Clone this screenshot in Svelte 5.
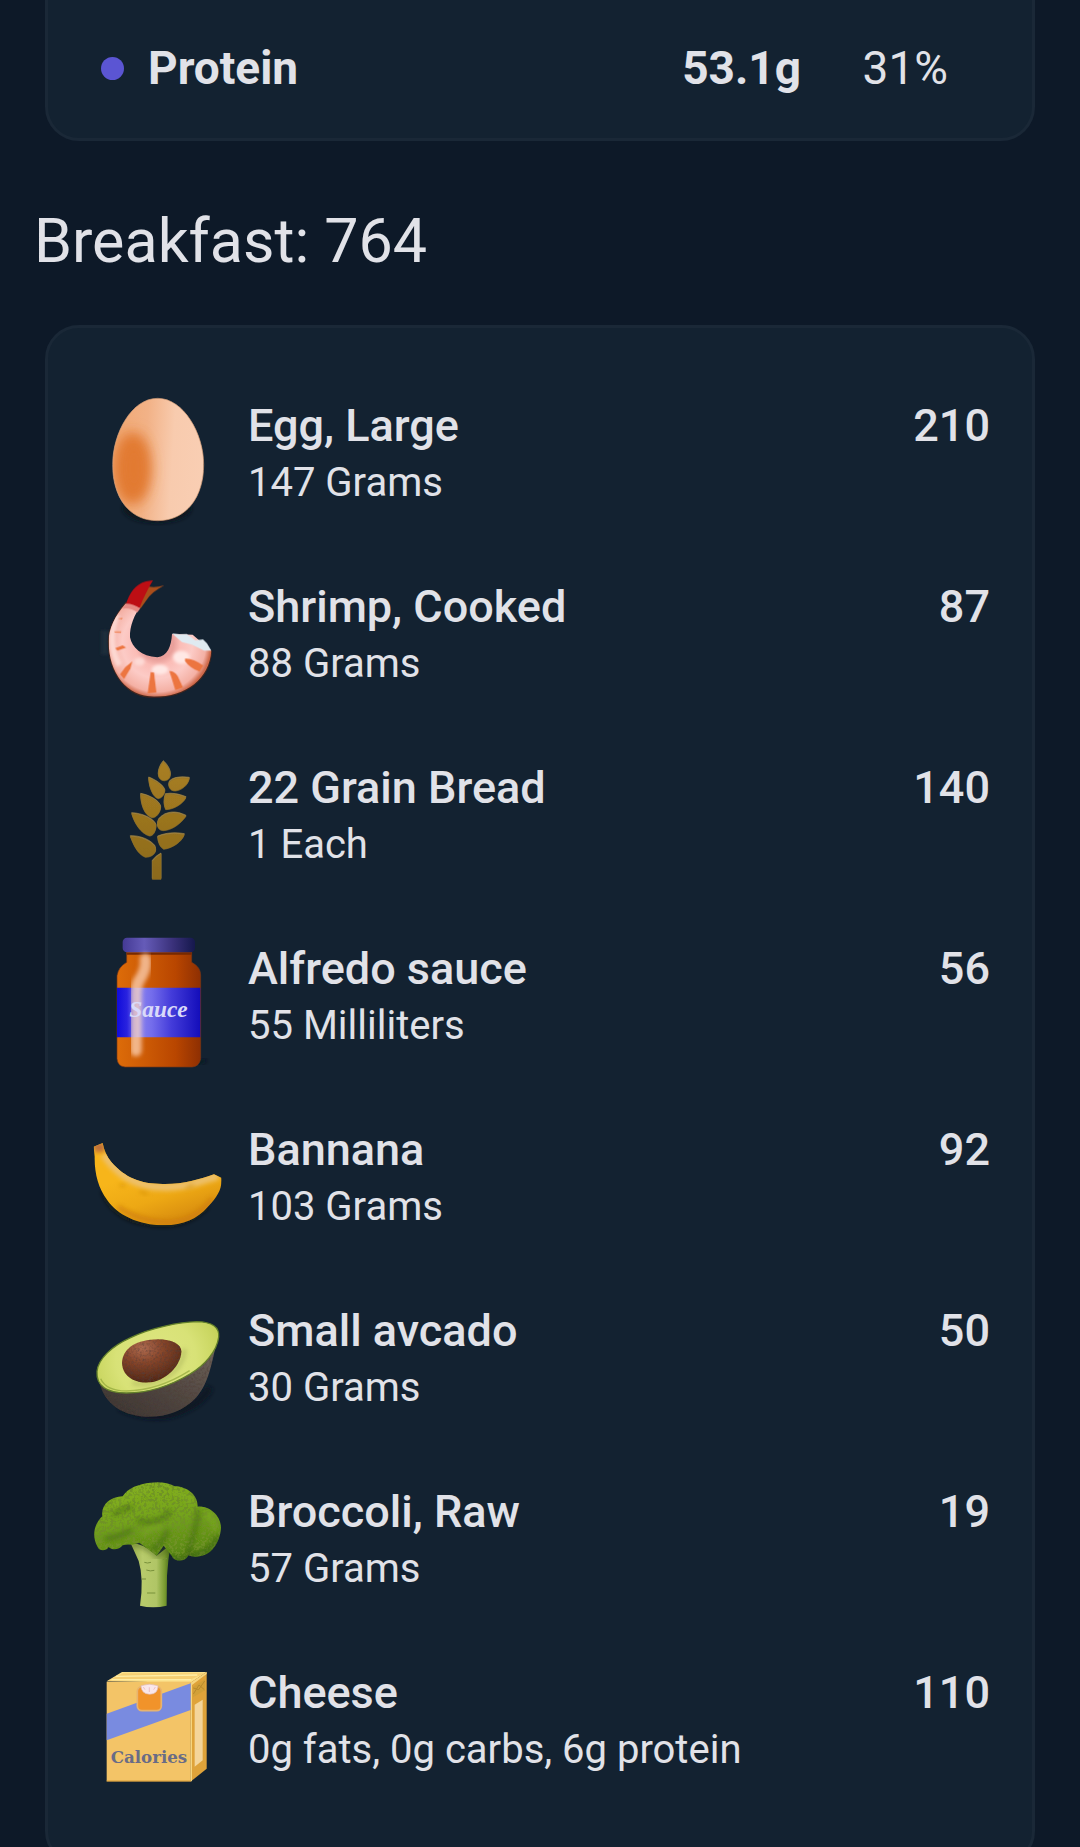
<script>
  const meal = { name: 'Breakfast', total: 764 };
  const foods = [
    { icon: 'egg', name: 'Egg, Large', detail: '147 Grams', calories: 210 },
    { icon: 'shrimp', name: 'Shrimp, Cooked', detail: '88 Grams', calories: 87 },
    { icon: 'grain', name: '22 Grain Bread', detail: '1 Each', calories: 140 },
    { icon: 'sauce', name: 'Alfredo sauce', detail: '55 Milliliters', calories: 56 },
    { icon: 'banana', name: 'Bannana', detail: '103 Grams', calories: 92 },
    { icon: 'avocado', name: 'Small avcado', detail: '30 Grams', calories: 50 },
    { icon: 'broccoli', name: 'Broccoli, Raw', detail: '57 Grams', calories: 19 },
    { icon: 'box', name: 'Cheese', detail: '0g fats, 0g carbs, 6g protein', calories: 110 },
  ];
</script>

{#snippet egg()}
  <svg class="icon" viewBox="0 -3 480 480" aria-hidden="true">
    <defs>
      <linearGradient id="egg-base" x1="0" x2="1" y1="0" y2="0.08">
        <stop offset="0" stop-color="#f0a670" />
        <stop offset="0.4" stop-color="#f2b287" />
        <stop offset="0.68" stop-color="#f8cbae" />
        <stop offset="1" stop-color="#f9ceb3" />
      </linearGradient>
      <filter id="egg-soft" x="-100%" y="-60%" width="300%" height="220%"><feGaussianBlur stdDeviation="20" /></filter>
      <filter id="egg-shadow"><feGaussianBlur stdDeviation="6" /></filter>
      <clipPath id="egg-clip"><path d="M233 55C310 55 371 160 371 254C371 350 320 422 233 422C146 422 98 350 98 254C98 160 155 55 233 55Z" /></clipPath>
    </defs>
    <ellipse cx="231" cy="385" rx="102" ry="43" fill="#0b141c" filter="url(#egg-shadow)" />
    <g clip-path="url(#egg-clip)">
      <rect x="90" y="50" width="290" height="380" fill="url(#egg-base)" />
      <ellipse cx="156" cy="265" rx="54" ry="108" fill="#e27a31" filter="url(#egg-soft)" />
      <ellipse cx="162" cy="265" rx="34" ry="90" fill="#e27a31" filter="url(#egg-soft)" />
    </g>
    <path d="M233 55C310 55 371 160 371 254C371 350 320 422 233 422C146 422 98 350 98 254C98 160 155 55 233 55Z" fill="none" stroke="#d9a27a" stroke-width="2" />
  </svg>
{/snippet}

{#snippet shrimp()}
  <svg class="icon" viewBox="0 0 480 480" aria-hidden="true">
    <defs>
      <radialGradient id="shrimp-body" gradientUnits="userSpaceOnUse" cx="232" cy="250" r="162">
        <stop offset="0.3" stop-color="#e9a09b" />
        <stop offset="0.42" stop-color="#fbbcb6" />
        <stop offset="0.65" stop-color="#fccbc6" />
        <stop offset="0.9" stop-color="#f4b0a4" />
        <stop offset="1" stop-color="#cf6a4c" />
      </radialGradient>
      <filter id="shrimp-soft" x="-40%" y="-40%" width="180%" height="180%"><feGaussianBlur stdDeviation="5" /></filter>
      <filter id="shrimp-fine"><feGaussianBlur stdDeviation="1.5" /></filter>
      <clipPath id="shrimp-clip"><path d="M136 132C106 166 86 206 86 244C86 340 140 410 222 410C320 410 388 356 394 272L338 224L276 222C274 260 262 288 232 292C184 290 156 262 150 232C148 200 164 160 184 138Z" /></clipPath>
    </defs>
    <rect x="64" y="212" width="22" height="72" fill="#1e2d3b" filter="url(#shrimp-soft)" />
    <path d="M140 126C106 166 86 206 86 244C86 340 140 411 222 411C320 411 389 356 394 272" fill="none" stroke="#43251f" stroke-width="5" filter="url(#shrimp-fine)" />
    <g clip-path="url(#shrimp-clip)">
      <rect x="70" y="110" width="340" height="320" fill="url(#shrimp-body)" />
      <path d="M112 164C92 210 88 266 118 316" fill="none" stroke="#ffe6e2" stroke-width="18" filter="url(#shrimp-soft)" opacity="0.7" />
      <ellipse cx="240" cy="329" rx="25" ry="15" fill="#ffe8e5" filter="url(#shrimp-soft)" />
      <ellipse cx="304" cy="292" rx="25" ry="20" fill="#ffe8e5" filter="url(#shrimp-soft)" />
      <ellipse cx="178" cy="305" rx="16" ry="12" fill="#fddad6" filter="url(#shrimp-soft)" />
      <g fill="#ec743f" filter="url(#shrimp-fine)">
        <path d="M212 336L222 338L229 398L203 400Z" />
        <path d="M268 333Q282 332 293 348L309 383L286 390Z" />
        <path d="M315 296Q338 294 370 317L359 335Q329 323 315 303Z" />
        <path d="M157 304L151 326L132 357L120 343L136 321Z" />
        <path d="M106 264L128 256L138 263L112 272Z" />
        <path d="M102 214L124 214L123 219L105 218ZM112 176L128 173L126 178Z" opacity="0.75" />
      </g>
    </g>
    <path d="M276 220L298 223L320 222L334 232L346 241L369 238L381 250L394 272L372 272L336 254L306 246Z" fill="#dfeaf1" />
    <path d="M160 132C176 108 190 84 207 80Q226 84 253 76Q214 96 199 121L182 145Z" fill="#a94e1b" />
    <path d="M138 132C148 100 166 72 198 64L219 61Q207 80 198 99Q188 118 178 145Q157 133 138 132Z" fill="#bd0e14" />
    <path d="M137 131Q158 130 181 145L172 157Q151 142 128 146Z" fill="#e58b84" filter="url(#shrimp-fine)" />
  </svg>
{/snippet}

{#snippet grain()}
  <svg class="icon" viewBox="0 3 480 480" aria-hidden="true">
    <defs>
      <linearGradient id="grain-fill" gradientUnits="userSpaceOnUse" x1="0" x2="0" y1="60" y2="420">
        <stop offset="0" stop-color="#a97f22" />
        <stop offset="1" stop-color="#8b691b" />
      </linearGradient>
      <filter id="grain-bevel"><feDropShadow dx="0" dy="-3" stdDeviation="0.8" flood-color="#a58743" /></filter>
    </defs>
    <g fill="url(#grain-fill)" stroke="#8f6f28" stroke-width="2" filter="url(#grain-bevel)">
      <path d="M250 65C262 75 273 94 271 106C269 128 237 128 235 105C234 91 241 75 250 65Z" />
      <path d="M206 114C227 122 249 137 254 151C256 162 244 176 235 176C219 173 207 143 206 114Z" />
      <path d="M328 115C325 135 306 151 286 153C269 154 262 136 269 125C282 113 306 112 328 115Z" />
      <path d="M182 163C208 168 237 183 242 201C242 218 227 236 215 233C194 227 182 195 182 163Z" />
      <path d="M256 164Q285 159 318 173C308 193 279 209 257 209Q248 190 256 164Z" />
      <path d="M155 221C188 222 222 239 228 256C228 275 219 289 208 288C183 281 163 250 155 221Z" />
      <path d="M318 229C302 252 275 271 250 272C230 272 229 250 237 238C258 215 289 214 318 229Z" />
      <path d="M151 290C180 289 211 302 224 319C234 338 217 352 196 352C171 341 161 315 151 290Z" />
      <path d="M313 284C306 306 276 325 251 328Q235 319 233 291C259 281 284 279 313 284Z" />
      <path d="M217 364Q227 350 243 342V418H217Z" />
    </g>
  </svg>
{/snippet}

{#snippet sauce()}
  <svg class="icon" viewBox="0 6 480 480" aria-hidden="true">
    <defs>
      <linearGradient id="jar-glass"><stop offset="0" stop-color="#dd6c09" /><stop offset="0.35" stop-color="#cc5a05" /><stop offset="0.7" stop-color="#b94600" /><stop offset="1" stop-color="#8e2f02" /></linearGradient>
      <linearGradient id="jar-lid"><stop offset="0" stop-color="#443a94" /><stop offset="0.3" stop-color="#655bb8" /><stop offset="0.7" stop-color="#393079" /><stop offset="1" stop-color="#15184c" /></linearGradient>
      <linearGradient id="jar-label"><stop offset="0" stop-color="#100cda" /><stop offset="0.12" stop-color="#2922df" /><stop offset="0.25" stop-color="#8982f0" /><stop offset="0.42" stop-color="#736ceb" /><stop offset="0.65" stop-color="#443cda" /><stop offset="1" stop-color="#130dba" /></linearGradient>
      <filter id="jar-soft" x="-50%" y="-20%" width="200%" height="140%"><feGaussianBlur stdDeviation="6" /></filter>
    </defs>
    <path d="M340 430Q362 430 378 419" fill="none" stroke="#0b151e" stroke-width="8" filter="url(#jar-soft)" />
    <path d="M140 96H335V127C352 137 362 147 362 168V416Q358 439 337 441H135Q113 439 111 416V167Q115 141 140 127Z" fill="url(#jar-glass)" stroke="#783716" stroke-width="2" />
    <path d="M140 101H335" stroke="#752902" stroke-width="7" />
    <rect x="128" y="53" width="217" height="44" rx="13" fill="url(#jar-lid)" />
    <path d="M111 203H361V352H111Z" fill="url(#jar-label)" />
    <path d="M196 117Q201 149 176 183Q168 199 168 222V392" fill="none" stroke="#ffd9c0" stroke-width="34" stroke-linecap="round" opacity="0.7" filter="url(#jar-soft)" />
    <text class="brand" x="148" y="292">Sauce</text>
  </svg>
{/snippet}

{#snippet banana()}
  <svg class="icon" viewBox="0 -21 480 480" aria-hidden="true">
    <defs>
      <linearGradient id="banana-skin" gradientUnits="userSpaceOnUse" x1="150" y1="200" x2="205" y2="370">
        <stop offset="0" stop-color="#f7b51a" /><stop offset="0.5" stop-color="#eda814" /><stop offset="1" stop-color="#d68a0e" />
      </linearGradient>
      <filter id="banana-soft" x="-20%" y="-30%" width="140%" height="160%"><feGaussianBlur stdDeviation="6" /></filter>
      <clipPath id="banana-clip"><path d="M41 110L68 99Q74 132 94 156C137 204 179 221 248 222C313 223 354 209 402 193L424 203C427 237 413 260 383 291C352 326 311 346 252 346C172 346 113 314 82 271C55 235 43 190 44 140Z" /></clipPath>
    </defs>
    <path d="M66 245C96 318 165 348 252 347C308 346 351 327 384 290" fill="none" stroke="#17160f" stroke-width="6" filter="url(#banana-soft)" />
    <g clip-path="url(#banana-clip)">
      <rect x="30" y="90" width="405" height="265" fill="url(#banana-skin)" />
      <path d="M72 133C115 200 174 229 248 231C313 234 355 213 414 198" fill="none" stroke="#edc06a" stroke-width="23" filter="url(#banana-soft)" />
      <path d="M114 291Q178 334 260 336T397 266" fill="none" stroke="#cb780c" stroke-width="14" opacity="0.65" filter="url(#banana-soft)" />
      <path d="M37 98H72L76 124Q61 129 44 125Z" fill="#bf713a" filter="url(#banana-soft)" />
      <path d="M179 245L204 252M118 226L136 227M318 235L341 224" stroke="#cf8b12" stroke-width="5" filter="url(#banana-soft)" />
    </g>
  </svg>
{/snippet}

{#snippet avocado()}
  <svg class="icon" viewBox="0 -18 480 480" aria-hidden="true">
    <defs>
      <radialGradient id="avo-flesh" gradientUnits="userSpaceOnUse" cx="228" cy="208" r="200"><stop offset="0.2" stop-color="#dce47e" /><stop offset="0.6" stop-color="#d8e277" /><stop offset="1" stop-color="#c6d35b" /></radialGradient>
      <linearGradient id="avo-skin" x1="0" y1="1" x2="1" y2="0"><stop offset="0" stop-color="#383230" /><stop offset="0.5" stop-color="#514741" /><stop offset="1" stop-color="#71655c" /></linearGradient>
      <radialGradient id="avo-pit" cx="0.35" cy="0.2" r="0.85"><stop offset="0" stop-color="#ae6b50" /><stop offset="0.4" stop-color="#87462b" /><stop offset="1" stop-color="#4d2415" /></radialGradient>
      <filter id="avo-soft" x="-20%" y="-30%" width="140%" height="160%"><feGaussianBlur stdDeviation="6" /></filter>
      <filter id="avo-noise" x="0" y="0" width="100%" height="100%">
        <feTurbulence type="fractalNoise" baseFrequency="0.15" numOctaves="2" result="n" />
        <feColorMatrix in="n" values="0 0 0 0 0.08  0 0 0 0 0.05  0 0 0 0 0.04  1.6 0 0 0 -0.7" />
        <feComposite in2="SourceGraphic" operator="in" result="t" />
        <feMerge><feMergeNode in="SourceGraphic" /><feMergeNode in="t" /></feMerge>
      </filter>
    </defs>
    <path d="M120 350Q195 386 266 374Q366 346 388 292" fill="none" stroke="#0b1620" stroke-width="22" filter="url(#avo-soft)" />
    <path d="M57 270C68 330 112 374 194 380C252 383 307 366 348 323C387 281 394 220 409 163Z" fill="url(#avo-skin)" filter="url(#avo-noise)" />
    <path d="M51 244C55 207 94 169 152 143C211 113 301 96 350 95C397 96 419 111 416 141C411 185 372 227 330 252C275 285 205 309 139 309C82 309 48 289 51 244Z" fill="url(#avo-flesh)" stroke="#63802a" stroke-width="4" />
    <path d="M62 266Q78 302 139 303C215 302 278 274 329 242" fill="none" stroke="#8aa234" stroke-width="4" opacity="0.65" />
    <path d="M157 278C218 297 310 251 313 177" fill="none" stroke="#b6bf62" stroke-width="15" opacity="0.7" filter="url(#avo-soft)" />
    <path d="M126 219C129 172 171 149 234 148C279 148 306 164 304 187C302 224 265 266 219 276C164 284 128 259 126 219Z" fill="url(#avo-pit)" filter="url(#avo-noise)" />
  </svg>
{/snippet}

{#snippet broccoli()}
  <svg class="icon" viewBox="0 15 480 480" aria-hidden="true">
    <defs>
      <linearGradient id="broc-stem"><stop offset="0" stop-color="#95aa4b" /><stop offset="0.3" stop-color="#b8cb6b" /><stop offset="0.65" stop-color="#b0c566" /><stop offset="0.85" stop-color="#7b9d32" /><stop offset="1" stop-color="#476b18" /></linearGradient>
      <linearGradient id="broc-crown" x1="0" y1="0" x2="0.2" y2="1"><stop offset="0" stop-color="#86b022" /><stop offset="0.5" stop-color="#76a51c" /><stop offset="1" stop-color="#588716" /></linearGradient>
      <filter id="broc-soft" x="-20%" y="-20%" width="140%" height="140%"><feGaussianBlur stdDeviation="8" /></filter>
      <filter id="broc-noise" x="0" y="0" width="100%" height="100%">
        <feTurbulence type="fractalNoise" baseFrequency="0.12" numOctaves="2" seed="4" result="n" />
        <feColorMatrix in="n" values="0 0 0 0 0.16  0 0 0 0 0.29  0 0 0 0 0.02  7 0 0 0 -3.3" />
        <feComposite in2="SourceGraphic" operator="in" result="t" />
        <feMerge><feMergeNode in="SourceGraphic" /><feMergeNode in="t" /></feMerge>
      </filter>
      <clipPath id="broc-clip"><path d="M67 169C62 135 91 110 128 109C143 83 177 72 211 68Q256 63 284 79C319 79 354 103 353 140C389 137 424 168 423 205C420 247 394 289 351 290Q334 291 325 286C317 307 283 307 275 287L251 257L230 287L178 248L157 254Q140 252 128 256C118 270 96 272 86 261C79 274 58 274 53 261C33 226 44 190 67 169Z" /></clipPath>
    </defs>
    <path d="M152 250Q193 250 230 287L271 255Q264 304 261 347L260 437Q219 446 180 437Q192 356 176 303Z" fill="url(#broc-stem)" />
    <path d="M154 253Q195 254 231 289L268 264" fill="none" stroke="#496018" stroke-width="12" opacity="0.6" filter="url(#broc-soft)" />
    <path d="M193 307Q202 311 213 307M199 330Q211 335 223 331M186 357H198M201 399H226M248 299L261 295" fill="none" stroke="#79913b" stroke-width="3" />
    <g clip-path="url(#broc-clip)">
      <rect x="38" y="60" width="390" height="250" fill="url(#broc-crown)" filter="url(#broc-noise)" />
      <path d="M75 237Q125 231 156 208M170 180Q213 194 249 173L274 153M356 146Q350 204 323 281M216 270Q250 249 263 211M100 165Q128 142 159 144" fill="none" stroke="#254b0a" stroke-width="13" opacity="0.4" filter="url(#broc-soft)" />
      <path d="M272 292Q310 306 330 286Q380 290 416 230" fill="none" stroke="#254b0a" stroke-width="16" opacity="0.45" filter="url(#broc-soft)" />
      <path d="M97 144Q133 109 208 88M279 101Q321 98 332 131M376 161Q411 183 401 215M186 225Q211 198 248 200" fill="none" stroke="#8bb729" stroke-width="16" opacity="0.35" filter="url(#broc-soft)" />
    </g>
  </svg>
{/snippet}

{#snippet box()}
  <svg class="icon" viewBox="0 -12 480 480" aria-hidden="true">
    <path d="M80 94L126 66H380L333 98Z" fill="#fbe08a" />
    <path d="M84 92L129 70H374L334 88Z" fill="#f6cf72" />
    <path d="M108 79L352 75M94 89H333" stroke="#ffeda5" stroke-width="4" />
    <path d="M331 98L380 66V356L333 394Z" fill="#dfa33a" />
    <path d="M332 98L380 66V72L336 105V394H331Z" fill="#f6d57e" />
    <path d="M344 164L368 149V331L344 350Z" fill="#f4d59a" />
    <path d="M339 111L375 88V121L339 142Z" fill="#d2a038" />
    <path d="M340 114L356 119L374 93M340 132L357 105L373 119" fill="none" stroke="#b98a2d" stroke-width="3" />
    <rect x="80" y="95" width="252" height="299" fill="#f3c467" />
    <path d="M80 191L332 100V180L80 271Z" fill="#798be0" />
    <path d="M80 393H333" stroke="#d99c34" stroke-width="3" />
    <rect x="172" y="110" width="72" height="72" rx="14" fill="#f1932a" stroke="#e7b36f" stroke-width="5" />
    <path d="M183 107Q208 98 234 107Q235 132 209 133Q183 131 183 107Z" fill="#fae7ea" stroke="#dfb9b2" stroke-width="2" />
    <path d="M208 126V112M195 119L190 111M221 119L226 111" stroke="#e4abb0" stroke-width="2" />
    <text class="box-label" x="92" y="339">Calories</text>
  </svg>
{/snippet}

<main>
  <section class="card macros" aria-label="Macros">
    <div class="macro">
      <span class="dot"></span>
      <span class="macro-name">Protein</span>
      <span class="grams">53.1g</span>
      <span class="percent">31%</span>
    </div>
  </section>

  <h1>{meal.name}: {meal.total}</h1>

  <ul class="card foods">
    {#each foods as food}
      <li>
        {#if food.icon === 'egg'}{@render egg()}
        {:else if food.icon === 'shrimp'}{@render shrimp()}
        {:else if food.icon === 'grain'}{@render grain()}
        {:else if food.icon === 'sauce'}{@render sauce()}
        {:else if food.icon === 'banana'}{@render banana()}
        {:else if food.icon === 'avocado'}{@render avocado()}
        {:else if food.icon === 'broccoli'}{@render broccoli()}
        {:else}{@render box()}{/if}
        <div class="info">
          <h2>{food.name}</h2>
          <p>{food.detail}</p>
        </div>
        <span class="calories">{food.calories}</span>
      </li>
    {/each}
  </ul>
</main>

<style>
  :global(body) {
    margin: 0;
    background: #0d1928;
  }
  main {
    box-sizing: border-box;
    height: 100vh;
    overflow-y: auto;
    scrollbar-width: none;
    padding-bottom: 48px;
    background: #0d1928;
    color: #e1e2e8;
    font-family: Roboto, "Liberation Sans", sans-serif;
    font-size: 45px;
    line-height: 64px;
  }
  h1, h2, p, ul {
    margin: 0;
    padding: 0;
  }
  .card {
    margin: 0 45px;
    border: 3px solid #1a2837;
    border-radius: 34px;
    background: #132231;
  }
  .macros {
    padding: 36px 84px 38px 53px;
    border-top: 0;
    border-radius: 0 0 34px 34px;
  }
  .macro {
    display: flex;
    align-items: center;
    font-size: 46px;
  }
  .dot {
    width: 23px;
    height: 23px;
    margin-right: 24px;
    border-radius: 50%;
    background: #5b55d3;
  }
  .macro-name {
    flex: 1;
    font-weight: 700;
  }
  .grams {
    font-weight: 700;
  }
  .percent {
    width: 147px;
    text-align: right;
  }
  h1 {
    padding: 60px 34px 44px;
    font-size: 61px;
    line-height: 80px;
    font-weight: 400;
  }
  .foods {
    padding: 40px 42px 46px 32px;
    list-style: none;
  }
  li {
    display: grid;
    grid-template-columns: 160px 1fr auto;
    column-gap: 8px;
    height: 181px;
  }
  .icon {
    width: 160px;
    height: 160px;
    align-self: center;
  }
  .info, .calories {
    padding-top: 26px;
  }
  h2, .calories {
    font-size: 45px;
    line-height: 64px;
    font-weight: 500;
  }
  p {
    font-size: 40px;
    line-height: 50px;
  }
  .brand {
    fill: #d9daf9;
    font: italic 700 70px "Liberation Serif", serif;
  }
  .box-label {
    fill: #696c86;
    font: 700 50px "DejaVu Serif", serif;
  }
</style>
